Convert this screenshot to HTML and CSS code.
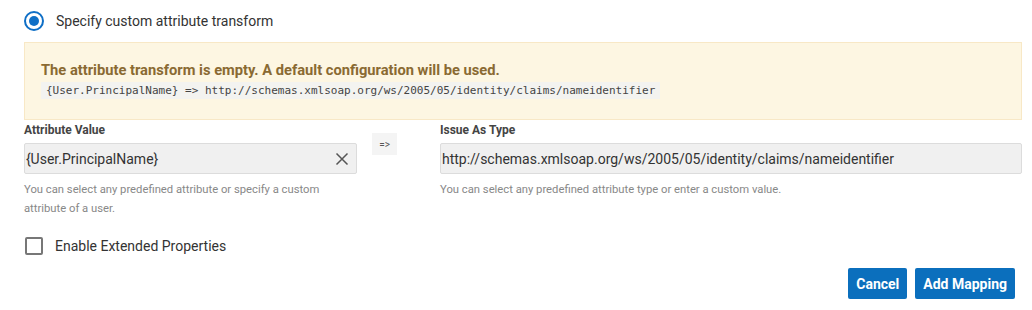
FILE: index.html
```html
<!DOCTYPE html>
<html lang="en">
<head>
    <meta charset="UTF-8">
    <title>Attribute Mapping</title>
    <link rel="stylesheet" href="styles.css">
</head>
<body>

    <label class="radio-row">
        <span class="radio"><span class="radio-dot"></span></span>
        <span class="radio-label">Specify custom attribute transform</span>
    </label>

    <div class="notice">
        <div class="notice-title">The attribute transform is empty. A default configuration will be used.</div>
        <code class="notice-code">{User.PrincipalName} =&gt; http://schemas.xmlsoap.org/ws/2005/05/identity/claims/nameidentifier</code>
    </div>

    <div class="mapping">
        <div class="field field-left">
            <div class="field-label">Attribute Value</div>
            <div class="field-input">
                <span class="field-text">{User.PrincipalName}</span>
                <svg class="clear-icon" width="14" height="14" viewBox="0 0 14 14">
                    <path d="M1.5 1.5 L12.5 12.5 M12.5 1.5 L1.5 12.5" stroke="#555" stroke-width="1.5" fill="none"/>
                </svg>
            </div>
            <div class="field-help">You can select any predefined attribute or specify a custom attribute of a user.</div>
        </div>

        <div class="arrow-box">=&gt;</div>

        <div class="field field-right">
            <div class="field-label">Issue As Type</div>
            <div class="field-input">
                <span class="field-text">http://schemas.xmlsoap.org/ws/2005/05/identity/claims/nameidentifier</span>
            </div>
            <div class="field-help">You can select any predefined attribute type or enter a custom value.</div>
        </div>
    </div>

    <label class="check-row">
        <span class="checkbox"></span>
        <span class="check-label">Enable Extended Properties</span>
    </label>

    <div class="actions">
        <button class="btn">Cancel</button>
        <button class="btn">Add Mapping</button>
    </div>

</body>
</html>
```

FILE: styles.css
```css
body {
    margin: 0;
    padding: 10px 10px 0 24px;
    font-family: Roboto, "Noto Sans", sans-serif;
    color: #333;
    background-color: #ffffff;
}

.radio-row {
    display: flex;
    align-items: center;
    gap: 12px;
    height: 22px;
}

.radio {
    width: 20px;
    height: 20px;
    box-sizing: border-box;
    border: 2px solid #0f6fc6;
    border-radius: 50%;
    display: flex;
    align-items: center;
    justify-content: center;
}

.radio-dot {
    width: 10px;
    height: 10px;
    border-radius: 50%;
    background-color: #0f6fc6;
}

.radio-label {
    font-size: 14px;
    color: #333;
}

.notice {
    margin-top: 10px;
    background-color: #fdf6e2;
    border: 1px solid #f8e8c6;
    padding: 18px 16px 18px 16px;
    height: 40px;
}

.notice-title {
    font-size: 14.7px;
    font-weight: bold;
    color: #8a6a32;
    line-height: 18px;
}

.notice-code {
    display: inline-block;
    margin-top: 3px;
    font-family: "DejaVu Sans Mono", monospace;
    font-size: 11px;
    line-height: 17px;
    background-color: #f3f3f0;
    color: #444;
    padding: 0 5px;
}

.mapping {
    display: flex;
    margin-top: 3px;
}

.field-left {
    width: 333px;
}

.field-right {
    flex: 1;
}

.field-label {
    font-size: 12px;
    font-weight: bold;
    color: #444;
    line-height: 14px;
}

.field-input {
    margin-top: 6px;
    height: 31px;
    box-sizing: border-box;
    background-color: #f0f0f0;
    border: 1px solid #dcdcdc;
    border-radius: 2px;
    display: flex;
    align-items: center;
    padding: 0 7px 0 1px;
    font-size: 14px;
    color: #333;
}

.field-text {
    flex: 1;
}

.field-help {
    margin-top: 6px;
    font-size: 11.25px;
    line-height: 19px;
    color: #888;
}

.arrow-box {
    margin: 10px 43px 0 15px;
    width: 25px;
    height: 22px;
    background-color: #f4f4f4;
    font-size: 10px;
    color: #555;
    display: flex;
    align-items: center;
    justify-content: center;
}

.check-row {
    display: flex;
    align-items: center;
    gap: 12px;
    margin-top: 19px;
}

.checkbox {
    width: 18px;
    height: 18px;
    box-sizing: border-box;
    border: 2px solid #777;
    border-radius: 2px;
    margin-left: 1px;
}

.check-label {
    font-size: 14px;
    color: #333;
}

.actions {
    display: flex;
    justify-content: flex-end;
    gap: 8px;
    margin-top: 13px;
    padding-right: 7px;
}

.btn {
    height: 31px;
    padding: 0 8px;
    border: none;
    border-radius: 2px;
    background-color: #0b6fbd;
    color: #ffffff;
    font-family: Roboto, "Noto Sans", sans-serif;
    font-size: 14px;
    font-weight: bold;
}
```
